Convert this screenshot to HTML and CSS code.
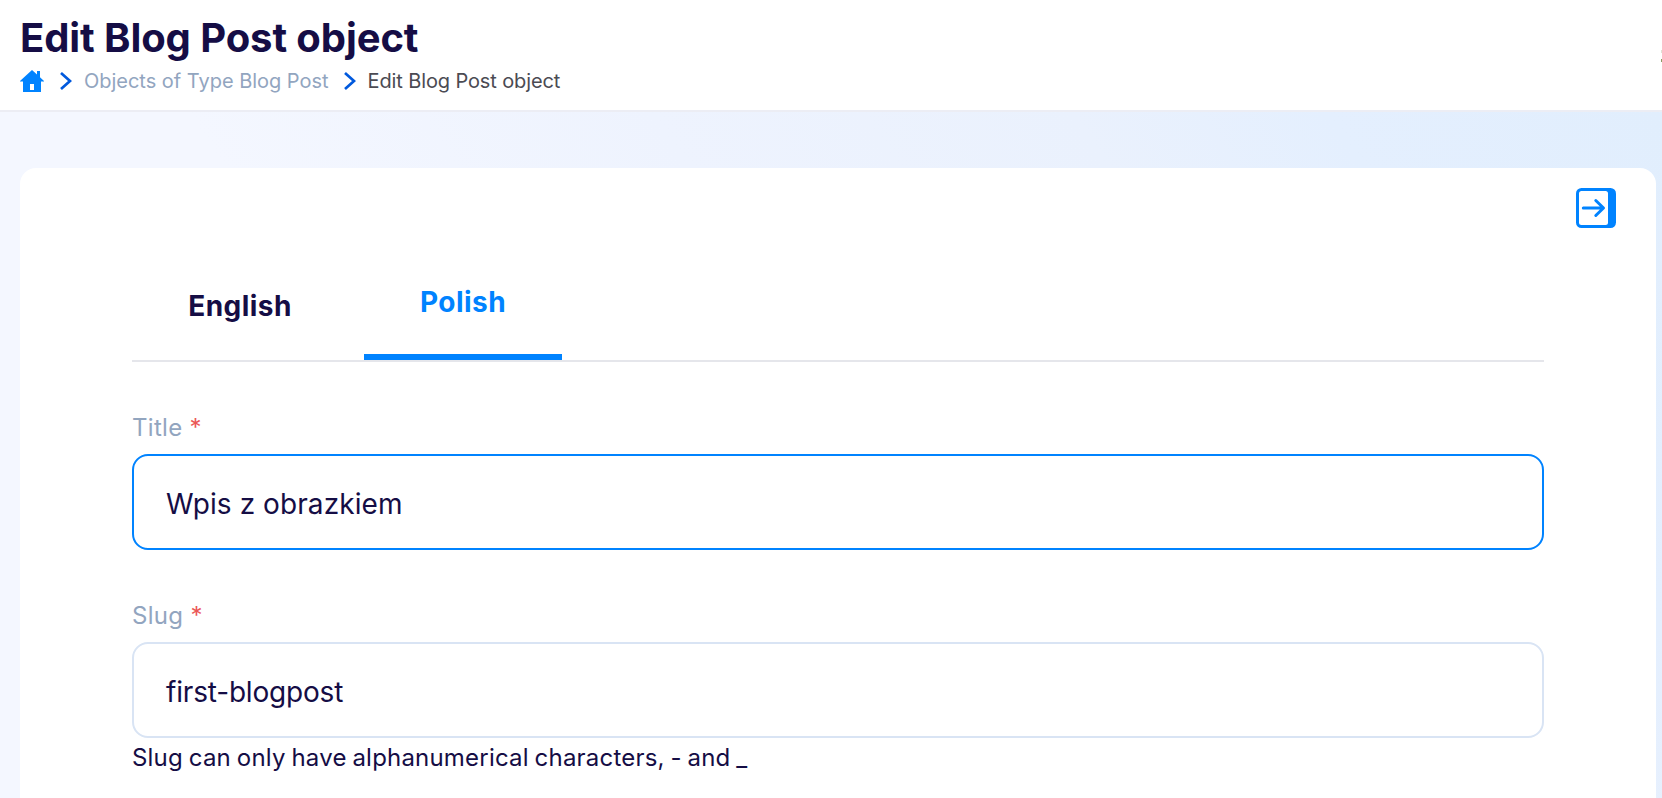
FILE: index.html
```html
<!DOCTYPE html>
<html lang="en">
<head>
<meta charset="utf-8">
<title>Edit Blog Post object</title>
<link rel="stylesheet" href="styles.css">
</head>
<body>
<header class="topbar">
  <div class="heading">
    <h1 class="page-title">Edit Blog Post object</h1>
    <nav class="breadcrumbs">
      <svg class="home" viewBox="0 0 24 22"><path fill="#0083ff" fill-rule="evenodd" d="M12 0L17 4.4V1H20V7.3L24 11V11.4H21V22H3V11.4H0V11ZM10 14V20H14V14Z"/></svg>
      <svg class="chevron" viewBox="0 0 12 18"><path d="M1 1L10 9L1 17"/></svg>
      <a class="crumb">Objects of Type Blog Post</a>
      <svg class="chevron" viewBox="0 0 12 18"><path d="M1 1L10 9L1 17"/></svg>
      <span class="crumb current">Edit Blog Post object</span>
    </nav>
  </div>
  <svg class="profile-edge" viewBox="0 0 1 14"><path fill="#dfe2d4" d="M0 0H1V3H0Z"/><path fill="#8b9a63" d="M0 9H1V12H0Z"/></svg>
</header>
<main class="content">
  <section class="card">
    <div class="card-tools">
      <svg class="collapse" viewBox="0 0 40 40"><rect width="40" height="40" rx="5.5" fill="#0083ff"/><rect x="3" y="3" width="29" height="34" rx="2.5" fill="#fff"/><path d="M7.3 20H27M19.8 12.5L27.5 20L19.8 27.5" fill="none" stroke="#0083ff" stroke-width="3" stroke-linecap="round" stroke-linejoin="round"/></svg>
    </div>
    <div class="tabs">
      <button class="tab">English</button>
      <button class="tab active">Polish</button>
    </div>
    <div class="field">
      <label class="label">Title <span class="required">*</span></label>
      <div class="input focused">Wpis z obrazkiem</div>
    </div>
    <div class="field">
      <label class="label">Slug <span class="required">*</span></label>
      <div class="input slug">first-blogpost</div>
      <p class="hint">Slug can only have alphanumerical characters, - and _</p>
    </div>
  </section>
</main>
</body>
</html>
```
FILE: styles.css
```css
* { box-sizing: border-box; }
body {
  margin: 0;
  height: 100vh;
  overflow: hidden;
  display: flex;
  flex-direction: column;
  font-family: Inter, "Liberation Sans", sans-serif;
  color: #150d45;
  background: #fff;
}
.topbar {
  flex: none;
  display: flex;
  justify-content: space-between;
  height: 112px;
  padding: 14px 0 0 20px;
  background: #fff;
  border-bottom: 2px solid #ecedf4;
}
.page-title {
  margin: 0;
  font-size: 40px;
  line-height: 48px;
  font-weight: 700;
  letter-spacing: -0.09px;
}
.breadcrumbs {
  display: flex;
  align-items: center;
  height: 38px;
}
.home { width: 24px; height: 22px; }
.chevron { width: 12px; height: 18px; margin: 0 12px 0 16px; }
.crumb + .chevron { margin-left: 15px; }
.chevron path { fill: none; stroke: #0059dd; stroke-width: 2.7; }
.crumb { font-size: 20px; line-height: 24px; letter-spacing: -0.02px; color: #92a5bf; }
.crumb.current { color: #4b4b53; letter-spacing: -0.12px; }
.profile-edge { width: 1px; height: 14px; margin-top: 36px; }
.content {
  flex: 1;
  min-height: 0;
  padding: 56px 6px 0 20px;
  background: linear-gradient(57deg, #f4f7ff 0%, #f4f7ff 30%, #eef3fe 52%, #eaf1fd 72%, #e4effe 84%, #e1eefd 100%);
}
.card {
  height: 100%;
  padding: 20px 112px 0;
  border-radius: 16px 16px 0 0;
  background: #fff;
}
.card-tools { display: flex; justify-content: flex-end; height: 80px; margin-right: -72px; }
.collapse { width: 40px; height: 40px; }
.tabs {
  display: flex;
  height: 94px;
  border-bottom: 2px solid #e5e6eb;
}
.tab {
  border: 0;
  padding: 0 0 16px;
  width: 216px;
  background: none;
  font: 700 28px/34px Inter, sans-serif;
  letter-spacing: 0.45px;
  color: #150d45;
}
.tab.active {
  width: 198px;
  margin-left: 16px;
  padding-bottom: 18px;
  border-bottom: 6px solid #0083ff;
  color: #0083ff;
}
.field { margin-top: 50px; }
.label { display: block; font-size: 24px; line-height: 32px; letter-spacing: 0.3px; color: #92a5bf; }
.required { color: #eb5757; }
.input {
  height: 96px;
  margin-top: 10px;
  padding: 0 32px;
  border: 2px solid #d9e4f4;
  border-radius: 16px;
  font-size: 28px;
  line-height: 96px;
  letter-spacing: 0.08px;
}
.input.slug { letter-spacing: -0.18px; }
.input.focused { border-color: #0083ff; }
.hint { margin: 4px 0 0; font-size: 24px; line-height: 32px; letter-spacing: 0.2px; word-spacing: -1.1px; }
```
